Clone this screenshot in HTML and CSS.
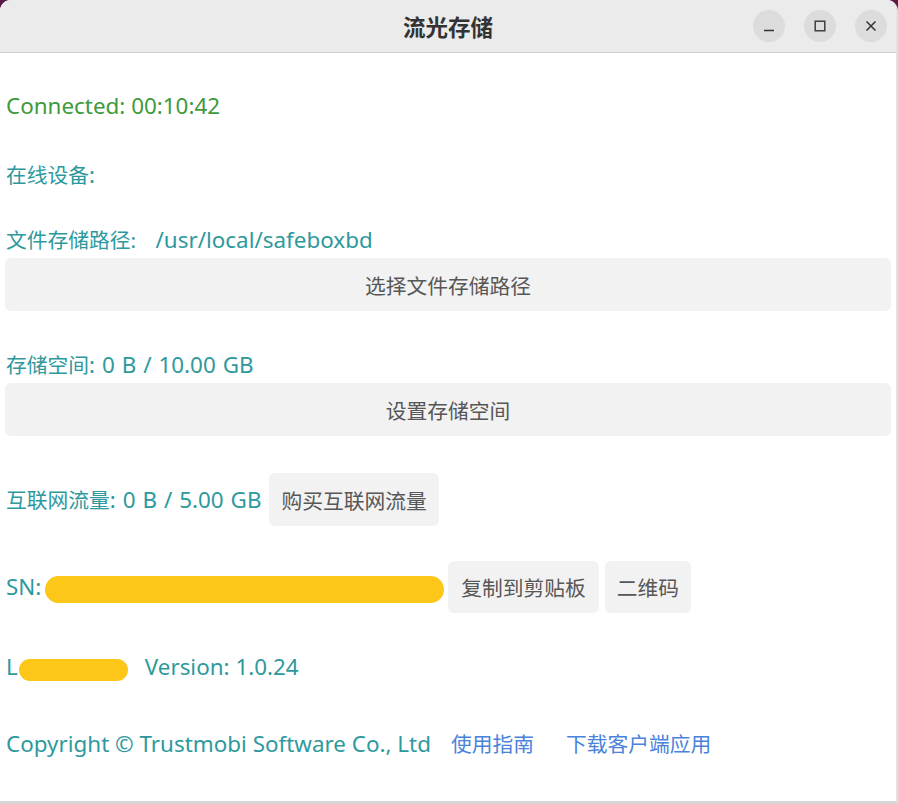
FILE: index.html
```html
<!DOCTYPE html>
<html lang="zh-CN">
<head>
    <meta charset="UTF-8">
    <meta name="viewport" content="width=device-width, initial-scale=1.0">
    <title>流光存储</title>
    <link rel="stylesheet" href="styles.css">
</head>
<body>
    <div class="window">
        <header class="titlebar">
            <h1 class="titlebar__title">流光存储</h1>
            <div class="titlebar__controls">
                <button class="titlebar__btn" aria-label="minimize">
                    <svg width="12" height="12" viewBox="0 0 12 12"><path d="M1 10.5h10" stroke="#333" stroke-width="1.4"/></svg>
                </button>
                <button class="titlebar__btn" aria-label="maximize">
                    <svg width="12" height="12" viewBox="0 0 12 12"><rect x="1.2" y="1.2" width="9.6" height="9.6" fill="none" stroke="#333" stroke-width="1.4"/></svg>
                </button>
                <button class="titlebar__btn" aria-label="close">
                    <svg width="12" height="12" viewBox="0 0 12 12"><path d="M1.5 1.5l9 9M10.5 1.5l-9 9" stroke="#333" stroke-width="1.5"/></svg>
                </button>
            </div>
        </header>

        <main class="panel">
            <p class="panel__line panel__line--connected"><span class="en">Connected: 00:10:42</span></p>
            <p class="panel__line panel__line--devices">在线设备<span class="en">:</span></p>

            <p class="panel__line panel__line--path">文件存储路径: <span class="en path">/usr/local/safeboxbd</span></p>
            <button class="panel__btn panel__btn--wide">选择文件存储路径</button>

            <p class="panel__line panel__line--space">存储空间<span class="en quota">: 0 B / 10.00 GB</span></p>
            <button class="panel__btn panel__btn--wide">设置存储空间</button>

            <div class="panel__row panel__row--traffic">
                <span class="panel__text">互联网流量<span class="en quota">: 0 B / 5.00 GB</span></span>
                <button class="panel__btn">购买互联网流量</button>
            </div>

            <div class="panel__row panel__row--sn">
                <span class="panel__text"><span class="en">SN:</span></span>
                <span class="mask mask--sn"></span>
                <button class="panel__btn">复制到剪贴板</button>
                <button class="panel__btn">二维码</button>
            </div>

            <div class="panel__row panel__row--version">
                <span class="panel__text"><span class="en">L</span></span>
                <span class="mask mask--license"></span>
                <span class="panel__text panel__text--version"><span class="en">Version: 1.0.24</span></span>
            </div>

            <div class="panel__row panel__row--footer">
                <span class="panel__text"><span class="en">Copyright © Trustmobi Software Co., Ltd</span></span>
                <a class="panel__link panel__link--guide" href="#">使用指南</a>
                <a class="panel__link panel__link--download" href="#">下载客户端应用</a>
            </div>
        </main>
    </div>
</body>
</html>
```

FILE: styles.css
```css
body {
    margin: 0;
    width: 898px;
    height: 804px;
    overflow: hidden;
    background-color: #5a1a46;
    font-family: "Noto Sans", "Noto Sans CJK SC", sans-serif;
}

.window {
    box-sizing: border-box;
    width: 898px;
    height: 804px;
    background-color: #fff;
    border-radius: 11px 11px 0 0;
    border-right: 2px solid #e2e2e2;
    border-bottom: 3px solid #d6d6d6;
    overflow: hidden;
}

.titlebar {
    position: relative;
    height: 52px;
    background-color: #ebebeb;
    border-bottom: 1px solid #cfcfcf;
    display: flex;
    align-items: center;
    justify-content: center;
}

.titlebar__title {
    margin: 0;
    font-size: 22.5px;
    font-weight: bold;
    color: #333;
}

.titlebar__controls {
    position: absolute;
    right: 9px;
    top: 10px;
    display: flex;
    gap: 19px;
}

.titlebar__btn {
    width: 32px;
    height: 32px;
    padding: 0;
    border: none;
    border-radius: 50%;
    background-color: #dcdcdc;
    display: flex;
    align-items: center;
    justify-content: center;
}

.panel {
    display: flex;
    flex-direction: column;
    align-items: flex-start;
    padding: 0 5px 0 6px;
}

.panel__line,
.panel__text {
    margin: 0;
    font-size: 20.75px;
    line-height: 28px;
    color: #2e999d;
    white-space: nowrap;
}

/* latin glyphs render a bit larger than the cjk ones */
.en {
    font-size: 1.08em;
}

.path {
    margin-left: 14px;
}

.quota {
    word-spacing: 1.1px;
}

.panel__line--connected {
    margin-top: 39px;
    color: #3f9a3c;
}

.panel__line--devices {
    margin-top: 41px;
}

.panel__line--path {
    margin-top: 37px;
}

.panel__line--space {
    margin-top: 40px;
}

.panel__btn {
    height: 53px;
    padding: 0 13px;
    border: none;
    border-radius: 6px;
    background-color: #f2f2f2;
    font-family: "Noto Sans", "Noto Sans CJK SC", sans-serif;
    font-size: 20.75px;
    color: #575757;
    white-space: nowrap;
}

.panel__btn--wide {
    align-self: stretch;
    margin: 4px 0 0 -1px;
}

.panel__row {
    display: flex;
    align-items: center;
}

.panel__row--traffic {
    margin-top: 37px;
    gap: 8px;
}

.panel__row--traffic .panel__btn {
    padding: 0 12px;
}

.panel__row--sn {
    margin-top: 35px;
}

.panel__row--sn .panel__btn {
    height: 52px;
    margin-left: 4px;
}

.panel__row--sn .panel__btn + .panel__btn {
    margin-left: 6px;
    padding: 0 12px;
}

.panel__row--version {
    margin-top: 40px;
}

.panel__row--footer {
    margin-top: 49px;
}

.mask {
    display: inline-block;
    background-color: #fdc719;
    border-radius: 14px;
}

.mask--sn {
    width: 399px;
    height: 27px;
    margin: 4px 0 0 4px;
}

.mask--license {
    width: 109px;
    height: 22px;
    margin: 6px 0 0 1px;
    border-radius: 11px;
}

.panel__text--version {
    margin-left: 17px;
}

.panel__link {
    font-size: 20.75px;
    line-height: 28px;
    color: #4a82dc;
    text-decoration: none;
}

.panel__link--guide {
    margin-left: 20px;
}

.panel__link--download {
    margin-left: 32px;
}
```
